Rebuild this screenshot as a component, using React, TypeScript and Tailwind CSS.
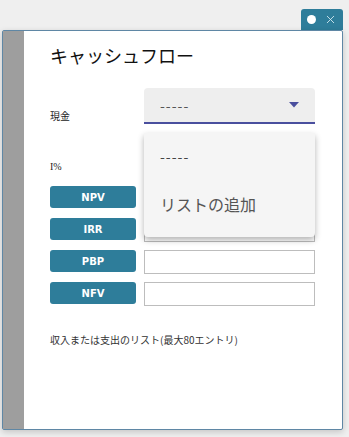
import { X } from 'lucide-react';

const jp = { fontFamily: '"Noto Sans CJK JP", "Noto Sans", sans-serif' };

const rows = ['NPV', 'IRR', 'PBP', 'NFV'];

const App = () => {
    return (
        <div className="w-[349px] h-[437px] bg-[#efefef] pt-[9px] pl-[2px] overflow-hidden" style={jp}>
            <div className="w-[341px] flex justify-end">
                {/* window controls */}
                <div className="w-[42px] h-[21px] bg-[#2e7d9a] rounded-t-[3px] flex items-center pl-[6px] gap-[8px]">
                    <div className="w-[9px] h-[9px] rounded-full bg-white" />
                    <X className="w-[13px] h-[13px] text-[#d8ecf3]" strokeWidth={1.6} />
                </div>
            </div>
            <div className="relative w-[341px] h-[400px] border border-[#5f87a5] rounded-[2px] bg-white flex shadow-[0_2px_6px_rgba(0,0,0,0.18)]">
                <div className="w-[21px] bg-[#9e9e9e]" />
                <div className="flex-1 pl-[26px] pt-[12px]">
                    <h1 className="text-[18px] leading-[24px] text-[#111]">キャッシュフロー</h1>

                    <div className="flex items-end mt-[21px]">
                        <span className="w-[94px] text-[10px] leading-[14px] text-[#222] pb-[1px]">現金</span>
                        <div className="w-[171px] h-[36px] bg-[#eeeeee] rounded-t-[4px] border-b-2 border-[#4a4f9e] flex items-center justify-between pl-[16px] pr-[16px]">
                            <span className="text-[14px] text-[#555] tracking-[1px]">-----</span>
                            <svg width="10" height="6" viewBox="0 0 10 6"><path d="M0 0 H10 L5 5.5 Z" fill="#4a4f9e" /></svg>
                        </div>
                    </div>

                    <div className="mt-[36px] text-[10px] leading-[14px] text-[#222]" style={{ fontFamily: '"Liberation Serif", serif' }}>I%</div>

                    <div className="mt-[12px] flex flex-col gap-[8px]">
                        {rows.map(r => (
                            <div key={r} className="flex gap-[8px] h-[24px]">
                                <button className="w-[86px] h-[22px] rounded-[3px] bg-[#2e7d9a] text-white text-[10px] font-bold" style={{ fontFamily: '"DejaVu Sans", sans-serif' }}>{r}</button>
                                <div className="w-[171px] h-[24px] border border-[#bdbdbd] bg-white" />
                            </div>
                        ))}
                    </div>

                    <p className="mt-[27px] text-[10px] leading-[14px] text-[#333]">収入または支出のリスト(最大80エントリ)</p>
                </div>

                {/* open select menu */}
                <div className="absolute left-[141px] top-[102px] w-[171px] bg-[#f5f5f5] rounded-b-[4px] pb-[8px] shadow-[0_3px_6px_rgba(0,0,0,0.3)]">
                    <div className="h-[46px] flex items-center pl-[16px] text-[14px] text-[#444] tracking-[1px]">-----</div>
                    <div className="h-[50px] flex items-center pl-[16px] text-[16px] text-[#555]">リストの追加</div>
                </div>
            </div>
        </div>
    );
};

export default App;
